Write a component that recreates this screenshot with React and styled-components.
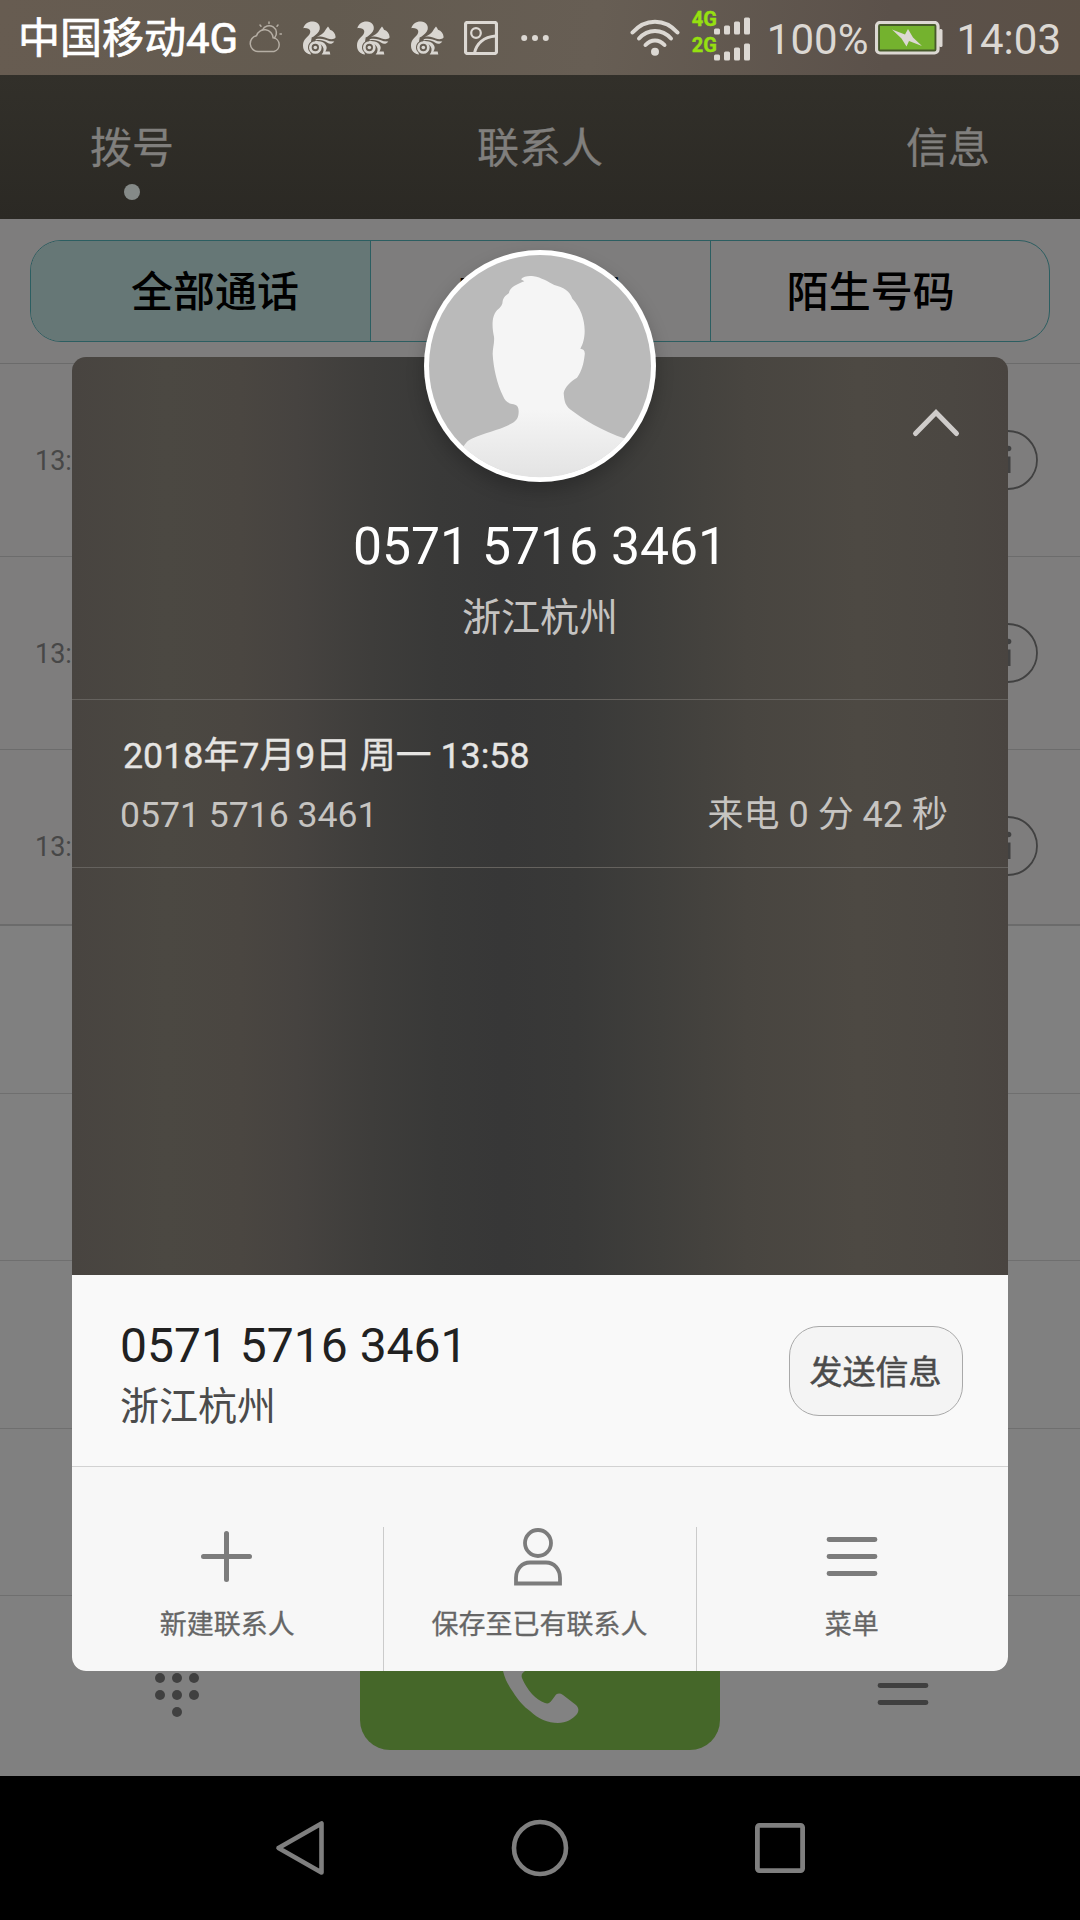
import styled, { createGlobalStyle } from 'styled-components';

const GlobalStyle = createGlobalStyle`
  * {
    box-sizing: border-box;
  }

  body {
    margin: 0;
    background: #000;
    font-family: Roboto, 'Noto Sans CJK SC', sans-serif;
  }

  svg {
    display: block;
    flex: none;
  }
`;

const Screen = styled.div`
  position: relative;
  display: flex;
  flex-direction: column;
  width: 1080px;
  height: 1920px;
  overflow: hidden;
  background: #000;
`;

/* ---------- status bar ---------- */

const StatusBar = styled.header`
  display: flex;
  align-items: center;
  justify-content: space-between;
  height: 75px;
  padding: 0 19px 0 18px;
  background: linear-gradient(97deg, #675c51 0%, #635b50 30%, #675e54 55%, #5b514a 82%, #5b5046 100%);
  color: #dcd8d3;
`;

const StatusGroup = styled.div`
  display: flex;
  align-items: center;
  height: 75px;
`;

const Carrier = styled.span`
  width: 231px;
  padding-top: 1px;
  font-size: 42px;
  line-height: 75px;
  color: #fff;
  -webkit-text-stroke: 0.7px #fff;
  white-space: nowrap;
`;

const StatusIcons = styled.div`
  display: flex;
  align-items: center;
  gap: 21px;

  svg:nth-last-child(2) {
    margin-left: -1px;
  }

  svg:last-child {
    margin-left: 2px;
  }
`;

const StatusText = styled.span`
  font-size: 42px;
  line-height: 75px;
  padding-top: 3px;
  margin-left: ${(props) => props.$left}px;
  margin-right: ${(props) => props.$right || 0}px;
  white-space: nowrap;
`;

const Networks = styled.div`
  display: flex;
  flex-direction: column;
  width: 60px;
  margin-left: 12px;
`;

const Network = styled.div`
  display: flex;
  align-items: flex-end;
  height: 26px;

  svg {
    margin-bottom: 3px;
  }
`;

const NetworkName = styled.span`
  width: 22px;
  font-size: 20px;
  font-weight: 700;
  line-height: 26px;
  height: 32px;
  color: #96e010;
  -webkit-text-stroke: 0.4px #96e010;
`;

/* ---------- dimmed phone app ---------- */

const PhoneApp = styled.main`
  display: flex;
  flex-direction: column;
  height: 1701px;
  background: #7e7d7d;
`;

const Tabs = styled.nav`
  display: flex;
  justify-content: space-between;
  height: 144px;
  padding: 52px 90px 0;
  background: linear-gradient(180deg, #32302a, #2b2924);
`;

const Tab = styled.div`
  display: flex;
  flex-direction: column;
  align-items: center;
  font-size: 42px;
  line-height: 44px;
  color: #807f7d;
  -webkit-text-stroke: 0.3px #807f7d;
`;

const TabDot = styled.i`
  width: 16px;
  height: 16px;
  margin-top: 13px;
  border-radius: 50%;
  background: #858a88;
`;

const FilterBar = styled.div`
  height: 145px;
  padding: 21px 30px 0;
  border-bottom: 1px solid #6b6b6b;
`;

const Segments = styled.div`
  display: grid;
  grid-template-columns: repeat(3, 1fr);
  height: 102px;
  border: 1px solid #2c5e61;
  border-radius: 31px;
  overflow: hidden;
`;

const Segment = styled.div`
  padding-left: ${(props) => props.$left}px;
  font-size: 42px;
  font-weight: 500;
  line-height: 103px;
  color: #000;
  background: ${(props) => (props.$active ? '#667776' : 'transparent')};

  & + & {
    border-left: 1px solid #2c5e61;
  }
`;

const CallList = styled.div`
  height: 560px;
  overflow: hidden;
`;

const CallRow = styled.div`
  display: flex;
  align-items: center;
  justify-content: space-between;
  height: 193px;
  padding: 0 42px 0 35px;
  border-bottom: 1px solid #6c6c6c;
`;

const CallTime = styled.span`
  padding-top: 2px;
  font-size: 27px;
  color: #474747;
`;

const DialPad = styled.div`
  flex: none;
  border-top: 2px solid #6b6b6b;
  background: #808080;
`;

const DialRow = styled.div`
  height: 167.5px;
  border-bottom: 1px solid #6f6f6f;
`;

const AppActions = styled.div`
  display: flex;
  align-items: flex-start;
  flex: 1;
  padding: 0 150px 0 154px;
  background: #808080;

  > svg {
    margin: 60px 0 0 auto;
  }
`;

const KeypadButton = styled.div`
  width: 206px;
  padding-top: 58px;
`;

const CallButton = styled.div`
  display: flex;
  justify-content: center;
  width: 360px;
  height: 144px;
  margin-top: 10px;
  padding-top: 26px;
  border-radius: 30px;
  background: #456729;
`;

const SystemNav = styled.footer`
  display: flex;
  align-items: center;
  justify-content: space-between;
  height: 144px;
  padding: 0 274px 0 275px;
`;

/* ---------- call detail card ---------- */

const Card = styled.section`
  position: absolute;
  left: 72px;
  top: 357px;
  display: flex;
  flex-direction: column;
  width: 936px;
  height: 1314px;
  border-radius: 14px;
  background: linear-gradient(
    90deg,
    #484440 0%,
    #4b4842 10%,
    #4a4641 18%,
    #464340 24%,
    #3e3d3b 32%,
    #393938 39%,
    #373737 46%,
    #393938 54%,
    #403f3c 63%,
    #484540 72%,
    #4d4943 84%,
    #4b4742 94%,
    #494440 100%
  );
`;

const Avatar = styled.div`
  position: absolute;
  left: 352px;
  top: -107px;
  width: 232px;
  height: 232px;
  border-radius: 50%;
  box-shadow: 0 8px 18px rgba(0, 0, 0, 0.22);
`;

const Collapse = styled.div`
  position: absolute;
  right: 45px;
  top: 50px;
`;

const Hero = styled.div`
  display: flex;
  flex-direction: column;
  align-items: center;
  height: 343px;
  padding-top: 160px;
  border-bottom: 1px solid #65625e;
`;

const HeroNumber = styled.h1`
  margin: 0;
  font-size: 51.7px;
  font-weight: 400;
  line-height: 60px;
  color: #fff;
`;

const HeroPlace = styled.p`
  margin: 13px 0 0;
  font-size: 39px;
  line-height: 57px;
  color: #c5c3c1;
`;

const Entry = styled.div`
  height: 168px;
  padding: 32px 60px 0 48px;
  border-bottom: 1px solid #65625e;
`;

const EntryDate = styled.div`
  padding-left: 3px;
  font-size: 35.8px;
  line-height: 48px;
  color: #e6e5e3;
  -webkit-text-stroke: 0.35px #e6e5e3;
`;

const EntryDetail = styled.div`
  display: flex;
  justify-content: space-between;
  margin-top: 11px;
  font-size: 36px;
  line-height: 49px;
  color: #c6c4c1;
`;

const EntryNumber = styled.span`
  font-size: 35.6px;
`;

const Contact = styled.div`
  display: flex;
  justify-content: space-between;
  height: 192px;
  margin-top: auto;
  padding: 0 45px 0 48px;
  border-bottom: 1px solid #d2d2d2;
  background: #f9f9f9;
`;

const ContactNumber = styled.div`
  margin-top: 43px;
  font-size: 48px;
  line-height: 56px;
  color: #212121;
`;

const ContactPlace = styled.div`
  margin-top: 5px;
  font-size: 39px;
  line-height: 57px;
  color: #4b4b4b;
`;

const MessageButton = styled.button`
  width: 174px;
  height: 90px;
  margin-top: 51px;
  padding: 0 1px 2px 0;
  border: 1px solid #a9a9a9;
  border-radius: 30px;
  background: #f4f4f4;
  font-family: inherit;
  font-size: 33px;
  color: #4b4b4b;
  -webkit-text-stroke: 0.5px #4b4b4b;
`;

const CardActions = styled.div`
  display: flex;
  height: 204px;
  padding-top: 60px;
  border-radius: 0 0 14px 14px;
  background: #f7f7f7;
`;

const CardAction = styled.div`
  display: flex;
  flex: 1;
  flex-direction: column;
  align-items: center;
  padding-right: 1px;
  font-size: 27px;
  line-height: 36px;
  color: #666;
  -webkit-text-stroke: 0.3px #666;

  &:not(:last-child) {
    border-right: 1px solid #cbcbcb;
  }

  svg {
    margin-bottom: 20px;
  }
`;

/* ---------- icons ---------- */

const WeatherIcon = () => (
  <svg width="33" height="34" viewBox="0 0 33 34" fill="none" stroke="#b5aea4" strokeWidth="1.5" strokeLinecap="round">
    <path d="M9 30.5a8 8 0 0 1-1.5-15.8 8.5 8.5 0 0 1 16.6 2.1A7 7 0 0 1 25 30.5Z" />
    <path d="M13.5 9a7.3 7.3 0 1 1 12 8" />
    <path d="M20 1v1.5M11 4l1 1.2M29 4l-1 1.2M31 13h1.5" />
  </svg>
);

const SquirrelIcon = () => (
  <svg width="33" height="34" viewBox="24 26 99 101" fill="#d9d6d1">
    <path d="M25 47C28 34 41 26 54 27c14 1 23 12 20 24-3 10-11 15-18 21-13 6-20 15-20 30 0 7 3 13 8 17l2 6C31 122 24 113 24 99c0-14 8-21 16-29 11-11 7-25-15-23Z" />
    <path d="M99 42c3 4 5 7 6 10 10 3 16 11 17 22-4 7-14 7-24 4-10-4-18-8-32-5 12-5 18-10 22-15 3-6 7-11 11-16Z" />
    <path d="M62 80c16-4 28 1 42 6l14 1c-6 8-14 9-21 4-11-7-22-10-35-7Z" />
    <path d="M60 86c20-2 34 7 35 19 0 5-2 9-4 12h13l2 9H80c7-8 7-17 3-24-5-8-13-11-23-11Z" />
    <circle cx="61" cy="105" r="15" fill="none" stroke="#d9d6d1" strokeWidth="8" />
    <circle cx="61" cy="105" r="5.5" />
    <path d="M28 104c0-14 8-24 22-28l-2 12c-6 4-9 10-9 17s3 12 7 15l2 6c-12-2-20-10-20-22Z" />
  </svg>
);

const PictureIcon = () => (
  <svg width="34" height="34" viewBox="0 0 34 34" fill="none" stroke="#dcd8d3" strokeWidth="3">
    <rect x="1.5" y="1.5" width="31" height="31" rx="2" strokeWidth="3.2" />
    <circle cx="12" cy="12" r="4.8" strokeWidth="2.2" />
    <path d="M10.5 32c2-9 9-16 21-17" />
  </svg>
);

const MoreIcon = () => (
  <svg width="28" height="8" viewBox="0 0 28 8" fill="#dcd8d3">
    <circle cx="3.2" cy="4" r="3" />
    <circle cx="14" cy="4" r="3" />
    <circle cx="24.8" cy="4" r="3" />
  </svg>
);

const WifiIcon = () => (
  <svg width="50" height="38" viewBox="0 0 50 38" fill="none" stroke="#dcd8d3" strokeWidth="4" strokeLinecap="round">
    <path d="M2.5 13.5C15-1 35-1 47.5 13.5" />
    <path d="M9 19.5c9-10 23-10 32 0" />
    <path d="M15.5 26c5.5-6 13.5-6 19 0" />
    <circle cx="25" cy="32.8" r="4" fill="#dcd8d3" stroke="none" />
  </svg>
);

const SignalBars = () => (
  <svg width="37" height="18" viewBox="0 0 37 18" fill="#dcd8d3">
    <rect x="0" y="11.5" width="6" height="6" rx="1.5" />
    <rect x="10" y="8.5" width="6" height="9" rx="1.5" />
    <rect x="20" y="4.5" width="6" height="13" rx="1.5" />
    <rect x="30" y="0.5" width="6" height="17" rx="1.5" />
  </svg>
);

const BatteryIcon = () => (
  <svg width="68" height="34" viewBox="0 0 68 34">
    <rect x="1.5" y="1.5" width="61.5" height="30.5" rx="3.5" fill="#465a2a" stroke="#dcd8d3" strokeWidth="3.2" />
    <rect x="64" y="8" width="3.5" height="18" rx="1.5" fill="#dcd8d3" />
    <rect x="5" y="5" width="54.5" height="23.5" fill="#74b22e" />
    <path d="M17 8.5l13 5L33 8l5 8.500L47 25l-13-5-2.500 5.500-5-8Z" fill="#dcd8d3" />
  </svg>
);

const InfoIcon = () => (
  <svg width="60" height="60" viewBox="0 0 60 60">
    <circle cx="30" cy="30" r="29" fill="none" stroke="#414141" strokeWidth="1.8" />
    <circle cx="30.5" cy="18.5" r="2.8" fill="#414141" />
    <path d="M26 26.500h6.500V43H26Z" fill="#414141" />
  </svg>
);

const PersonAvatar = () => (
  <svg width="232" height="232" viewBox="28 29 696 696">
    <defs>
      <linearGradient id="body" x1="0" y1="0" x2="0" y2="1">
        <stop offset="0.65" stopColor="#f5f5f5" />
        <stop offset="1" stopColor="#e2e2e2" />
      </linearGradient>
      <clipPath id="round">
        <circle cx="376" cy="377" r="334" />
      </clipPath>
    </defs>
    <circle cx="376" cy="377" r="348" fill="#fff" />
    <circle cx="376" cy="377" r="333" fill="#bababa" />
    <path
      clipPath="url(#round)"
      fill="url(#body)"
      d="M319 117c7-9 23-11 38-9 22 3 44 17 62 26 27 7 46 18 54 41 24 26 37 60 37 96 0 23-5 39-13 54 10 1 15 7 13 19-3 27-9 49-23 68-16 9-37 27-40 46 2 21 2 33 19 49 36 27 97 67 166 88v130H140V627c9-12 15-25 31-32 38-18 85-26 121-46 15-8 20-18 20-36 0-14-6-21-20-22-14-3-21-10-27-24-17-33-29-85-31-126 0-18 6-34 4-52-6-26-8-61 9-79 12-10 17-18 17-28 3-13 12-18 19-24 1-16 25-27 46-35Z"
    />
  </svg>
);

const ChevronUpIcon = () => (
  <svg width="54" height="36" viewBox="0 0 54 36" fill="none" stroke="#cfccca" strokeWidth="5" strokeLinecap="round">
    <path d="M6.500 26.500L27 5.500l20.500 21" />
  </svg>
);

const PlusIcon = () => (
  <svg width="54" height="60" viewBox="0 0 54 60" stroke="#7c7c7c" strokeWidth="5" strokeLinecap="round">
    <path d="M26.500 6.500v46M3.500 29.500h46" />
  </svg>
);

const PersonIcon = () => (
  <svg width="54" height="60" viewBox="0 0 54 60" fill="none" stroke="#7c7c7c" strokeWidth="3.8">
    <circle cx="26" cy="16" r="13" />
    <path d="M4 56.500V51c0-9 6-15.500 14-15.500h16c8 0 14 6.500 14 15.500v5.500Z" />
  </svg>
);

const MenuIcon = ({ color }) => (
  <svg width="54" height="60" viewBox="0 0 54 60" stroke={color} strokeWidth="4.8" strokeLinecap="round">
    <path d="M4 12.500h46M4 29.500h46M4 46.500h46" />
  </svg>
);

const KeypadIcon = () => (
  <svg width="46" height="64" viewBox="0 0 46 64" fill="#404040">
    {[6, 23, 40].map((x) => [7, 24, 41].map((y) => <circle key={`${x}-${y}`} cx={x} cy={y} r="5" />))}
    <circle cx="23" cy="58" r="5" />
  </svg>
);

const HandsetIcon = () => (
  <svg width="80" height="92" viewBox="0 0 80 92" fill="#828282">
    <path d="M3 39c2 8 5 14 10 21 5 8 11 15 17 19 8 8 18 12 28 12 8 0 15-4 19-9 2-3 2-6-1-9L63 63c-3-2-6-2-8 1l-3 4c-2 3-4 4-7 3-9-3-18-13-23-25-1-3 0-5 3-7 7-5 8-10 6-14l-6-14c-3-6-7-8-12-4-9 7-13 18-10 32Z" />
  </svg>
);

const BackIcon = () => (
  <svg width="50" height="58" viewBox="0 0 50 58" fill="none" stroke="#7f7f7f" strokeWidth="4.6" strokeLinejoin="round">
    <path d="M3.500 29L46.500 4.500v49Z" />
  </svg>
);

const HomeIcon = () => (
  <svg width="58" height="58" viewBox="0 0 58 58" fill="none" stroke="#7f7f7f" strokeWidth="4.6">
    <circle cx="29" cy="29" r="26" />
  </svg>
);

const RecentIcon = () => (
  <svg width="52" height="52" viewBox="0 0 52 52" fill="none" stroke="#7f7f7f" strokeWidth="4.8">
    <rect x="3.4" y="3.4" width="45.2" height="45.2" rx="2" />
  </svg>
);

const App = () => {
  return (
    <Screen>
      <GlobalStyle />
      <StatusBar>
        <StatusGroup>
          <Carrier>中国移动4G</Carrier>
          <StatusIcons>
            <WeatherIcon />
            <SquirrelIcon />
            <SquirrelIcon />
            <SquirrelIcon />
            <PictureIcon />
            <MoreIcon />
          </StatusIcons>
        </StatusGroup>
        <StatusGroup>
          <WifiIcon />
          <Networks>
            <Network>
              <NetworkName>4G</NetworkName>
              <SignalBars />
            </Network>
            <Network>
              <NetworkName>2G</NetworkName>
              <SignalBars />
            </Network>
          </Networks>
          <StatusText $left={15} $right={7}>
            100%
          </StatusText>
          <BatteryIcon />
          <StatusText $left={13}>14:03</StatusText>
        </StatusGroup>
      </StatusBar>

      <PhoneApp>
        <Tabs>
          <Tab>
            拨号
            <TabDot />
          </Tab>
          <Tab>联系人</Tab>
          <Tab>信息</Tab>
        </Tabs>
        <FilterBar>
          <Segments>
            <Segment $active $left={100}>
              全部通话
            </Segment>
            <Segment $left={84}>未接来电</Segment>
            <Segment $left={76}>陌生号码</Segment>
          </Segments>
        </FilterBar>
        <CallList>
          <CallRow>
            <CallTime>13:</CallTime>
            <InfoIcon />
          </CallRow>
          <CallRow>
            <CallTime>13:</CallTime>
            <InfoIcon />
          </CallRow>
          <CallRow>
            <CallTime>13:</CallTime>
            <InfoIcon />
          </CallRow>
        </CallList>
        <DialPad>
          <DialRow />
          <DialRow />
          <DialRow />
          <DialRow />
        </DialPad>
        <AppActions>
          <KeypadButton>
            <KeypadIcon />
          </KeypadButton>
          <CallButton>
            <HandsetIcon />
          </CallButton>
          <MenuIcon color="#404040" />
        </AppActions>
      </PhoneApp>

      <SystemNav>
        <BackIcon />
        <HomeIcon />
        <RecentIcon />
      </SystemNav>

      <Card>
        <Avatar>
          <PersonAvatar />
        </Avatar>
        <Collapse>
          <ChevronUpIcon />
        </Collapse>
        <Hero>
          <HeroNumber>0571 5716 3461</HeroNumber>
          <HeroPlace>浙江杭州</HeroPlace>
        </Hero>
        <Entry>
          <EntryDate>2018年7月9日 周一 13:58</EntryDate>
          <EntryDetail>
            <EntryNumber>0571 5716 3461</EntryNumber>
            <span>来电 0 分 42 秒</span>
          </EntryDetail>
        </Entry>
        <Contact>
          <div>
            <ContactNumber>0571 5716 3461</ContactNumber>
            <ContactPlace>浙江杭州</ContactPlace>
          </div>
          <MessageButton>发送信息</MessageButton>
        </Contact>
        <CardActions>
          <CardAction>
            <PlusIcon />
            新建联系人
          </CardAction>
          <CardAction>
            <PersonIcon />
            保存至已有联系人
          </CardAction>
          <CardAction>
            <MenuIcon color="#7c7c7c" />
            菜单
          </CardAction>
        </CardActions>
      </Card>
    </Screen>
  );
};

export default App;
